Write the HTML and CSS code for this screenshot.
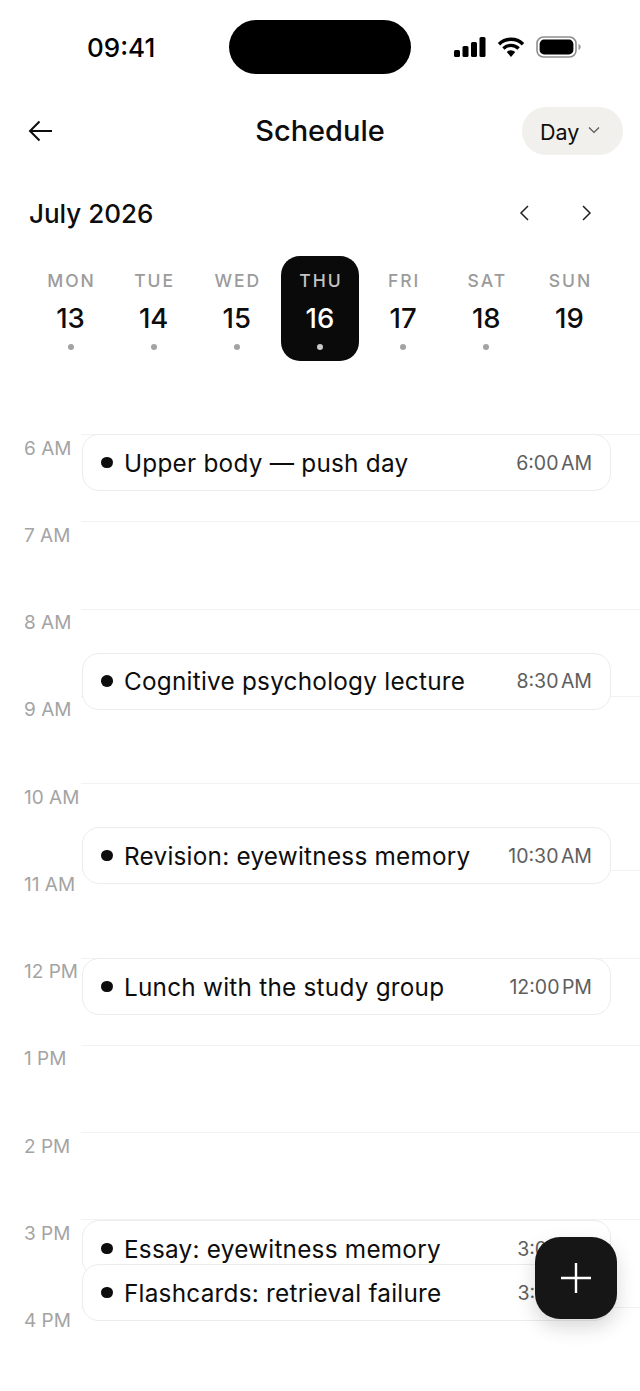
FILE: index.html
```html
<!DOCTYPE html>
<html lang="en">
<head>
<meta charset="utf-8">
<title>Schedule</title>
<link rel="stylesheet" href="styles.css">
</head>
<body>
<div class="screen">
  <header class="status">
    <span class="clock">09:41</span>
    <span class="island"></span>
    <span class="status-icons">
      <svg class="ic-signal" viewBox="0 0 33 20" width="33" height="20"><rect x="1" y="13" width="6" height="7" rx="1.5"/><rect x="9.500" y="9" width="6" height="11" rx="1.5"/><rect x="18" y="5" width="6" height="15" rx="1.5"/><rect x="26.500" y="0" width="6" height="20" rx="1.5"/></svg>
      <svg class="ic-wifi" viewBox="0 0 28 20" width="28" height="20"><path d="M2 7.2a17 17 0 0 1 24 0M6.400 11.400a11 11 0 0 1 15.200 0" fill="none" stroke="#000" stroke-width="3.400"/><path d="M9.800 15a6 6 0 0 1 8.400 0L14 20z"/></svg>
      <svg class="ic-batt" viewBox="0 0 46 22" width="46" height="22"><rect x="1" y="1" width="39" height="20" rx="6.500" fill="#fff" stroke="#8e8e8e" stroke-width="1.600"/><rect x="3.600" y="3.600" width="33.800" height="14.800" rx="4.400"/><path d="M42.500 8v6c1.400-.5 2.200-1.600 2.200-3s-.8-2.500-2.200-3z" fill="#9a9a9a"/></svg>
    </span>
  </header>

  <nav class="topbar">
    <svg class="back" viewBox="0 0 26 24" width="26" height="24"><path d="M24 12H2M11.500 2.500 2 12l9.500 9.500" fill="none" stroke="#0d0d0d" stroke-width="2"/></svg>
    <h1 class="title">Schedule</h1>
    <button class="pill">Day
      <svg viewBox="0 0 12 8" width="12" height="8"><path d="M1 1.500 6 6.500l5-5" fill="none" stroke="#555" stroke-width="1.200"/></svg>
    </button>
  </nav>

  <section class="month">
    <h2 class="month-name">July 2026</h2>
    <div class="month-nav">
      <svg viewBox="0 0 12 18" width="12" height="18"><path d="M10 2 3 9l7 7" fill="none" stroke="#222" stroke-width="1.500"/></svg>
      <svg viewBox="0 0 12 18" width="12" height="18"><path d="m2 2 7 7-7 7" fill="none" stroke="#222" stroke-width="1.500"/></svg>
    </div>
  </section>

  <section class="week">
    <div class="day"><span class="dow">MON</span><span class="num">13</span><i class="dot"></i></div>
    <div class="day"><span class="dow">TUE</span><span class="num">14</span><i class="dot"></i></div>
    <div class="day"><span class="dow">WED</span><span class="num">15</span><i class="dot"></i></div>
    <div class="day active"><span class="dow">THU</span><span class="num">16</span><i class="dot"></i></div>
    <div class="day"><span class="dow">FRI</span><span class="num">17</span><i class="dot"></i></div>
    <div class="day"><span class="dow">SAT</span><span class="num">18</span><i class="dot"></i></div>
    <div class="day"><span class="dow">SUN</span><span class="num">19</span><i class="dot none"></i></div>
  </section>

  <section class="timeline">
    <div class="hour"><span class="label">6 AM</span></div>
    <div class="hour"><span class="label">7 AM</span></div>
    <div class="hour"><span class="label">8 AM</span></div>
    <div class="hour"><span class="label">9 AM</span></div>
    <div class="hour"><span class="label">10 AM</span></div>
    <div class="hour"><span class="label">11 AM</span></div>
    <div class="hour"><span class="label">12 PM</span></div>
    <div class="hour"><span class="label">1 PM</span></div>
    <div class="hour"><span class="label">2 PM</span></div>
    <div class="hour"><span class="label">3 PM</span></div>
    <div class="hour"><span class="label">4 PM</span></div>

    <article class="event e1"><i class="bullet"></i><span class="name">Upper body — push day</span><span class="when">6:00 AM</span></article>
    <article class="event e2"><i class="bullet"></i><span class="name">Cognitive psychology lecture</span><span class="when">8:30 AM</span></article>
    <article class="event e3"><i class="bullet"></i><span class="name">Revision: eyewitness memory</span><span class="when">10:30 AM</span></article>
    <article class="event e4"><i class="bullet"></i><span class="name">Lunch with the study group</span><span class="when">12:00 PM</span></article>
    <article class="event e5"><i class="bullet"></i><span class="name">Essay: eyewitness memory</span><span class="when">3:00 PM</span></article>
    <article class="event e6"><i class="bullet"></i><span class="name">Flashcards: retrieval failure</span><span class="when">3:30 PM</span></article>
  </section>

  <button class="fab" aria-label="Add">
    <svg viewBox="0 0 32 32" width="32" height="32"><path d="M16 1v30M1 16h30" stroke="#fff" stroke-width="2.400" fill="none"/></svg>
  </button>
</div>
</body>
</html>
```
FILE: styles.css
```css
* { box-sizing: border-box; }
html, body { margin: 0; padding: 0; background: #fff; }
body { font-family: Inter, "Liberation Sans", sans-serif; color: #0d0d0d; }
.screen { position: relative; width: 640px; height: 1391px; overflow: hidden; background: #fff; }

.status { height: 94px; padding: 20px 58px 0 87px; display: flex; align-items: flex-start; }
.clock { width: 142px; height: 54px; line-height: 55px; font-size: 26px; font-weight: 500; color: #000; }
.island { width: 182px; height: 54px; border-radius: 27px; background: #000; }
.status-icons { height: 54px; margin-left: 42px; display: flex; align-items: center; gap: 10px; }
.status-icons svg { display: block; fill: #000; }
.ic-wifi { margin-left: 1px; margin-right: 1px; }
.ic-batt { margin-left: 0; }

.topbar { height: 74px; padding: 0 17px 0 28px; display: flex; align-items: center; position: relative; }
.back { display: block; }
.title { position: absolute; left: 0; right: 0; margin: -2px 0 0; text-align: center; font-size: 29px; font-weight: 500; letter-spacing: 0; pointer-events: none; }
.pill { margin-left: auto; width: 101px; height: 48px; border: 0; border-radius: 24px; background: #f1f0ec; color: #0d0d0d; font: 400 21.500px Inter, "Liberation Sans", sans-serif; display: flex; align-items: center; justify-content: flex-start; gap: 9px; padding: 2px 0 0 18px; }
.pill svg { display: block; margin-top: -4px; }

.month { height: 66px; padding: 0 47px 0 29px; display: flex; align-items: center; justify-content: space-between; margin-top: 12px; }
.month-name { margin: 0; font-size: 26px; font-weight: 500; }
.month-nav { display: flex; gap: 51px; }
.month-nav svg { display: block; }

.week { margin-top: 10px; height: 105px; padding: 0 31.500px; display: grid; grid-template-columns: repeat(7, 1fr); column-gap: 5.170px; width: 640px; }
.day { border-radius: 19px; display: flex; flex-direction: column; align-items: center; }
.dow { margin-top: 14px; height: 22px; line-height: 22px; padding-left: 2px; font-size: 17.500px; font-weight: 450; letter-spacing: 2px; color: #9b9b9b; }
.num { margin-top: 11px; height: 30px; line-height: 30px; font-size: 27.500px; font-weight: 450; color: #0d0d0d; }
.dot { width: 6px; height: 6px; margin-top: 11px; border-radius: 50%; background: #a3a3a3; }
.dot.none { background: transparent; }
.day.active { background: #0a0a0a; }
.day.active .dow { color: #c4c4c4; }
.day.active .num { color: #fff; }
.day.active .dot { background: #c9c9c9; }

.timeline { position: absolute; left: 0; top: 434px; width: 640px; }
.hour { height: 87.250px; margin-left: 81px; border-top: 1.500px solid #f2f2f1; position: relative; }
.label { position: absolute; left: -57px; top: 1.500px; font-size: 19px; line-height: 24px; color: #a4a4a4; white-space: nowrap; }

.event { position: absolute; left: 82px; width: 529px; height: 57px; background: #fff; border: 1.500px solid #ececea; border-radius: 17px; display: flex; align-items: center; padding: 0 18px; }
.e1 { top: 0; }
.e2 { top: 218.500px; }
.e3 { top: 393px; }
.e4 { top: 524px; }
.e5 { top: 786px; }
.e6 { top: 830px; }
.bullet { width: 11.500px; height: 11.500px; border-radius: 50%; background: #0d0d0d; margin-right: 11.500px; flex: none; }
.name { font-size: 24.300px; font-weight: 430; letter-spacing: .25px; white-space: nowrap; }
.when { margin-left: auto; font-size: 19.500px; word-spacing: -3px; color: #5e5e5e; white-space: nowrap; }

.fab { position: absolute; left: 535px; top: 1237px; width: 82px; height: 82px; border: 0; padding: 0; border-radius: 25px; background: #161616; display: flex; align-items: center; justify-content: center; box-shadow: 0 8px 20px rgba(0,0,0,.16); }
.fab svg { display: block; }
```
